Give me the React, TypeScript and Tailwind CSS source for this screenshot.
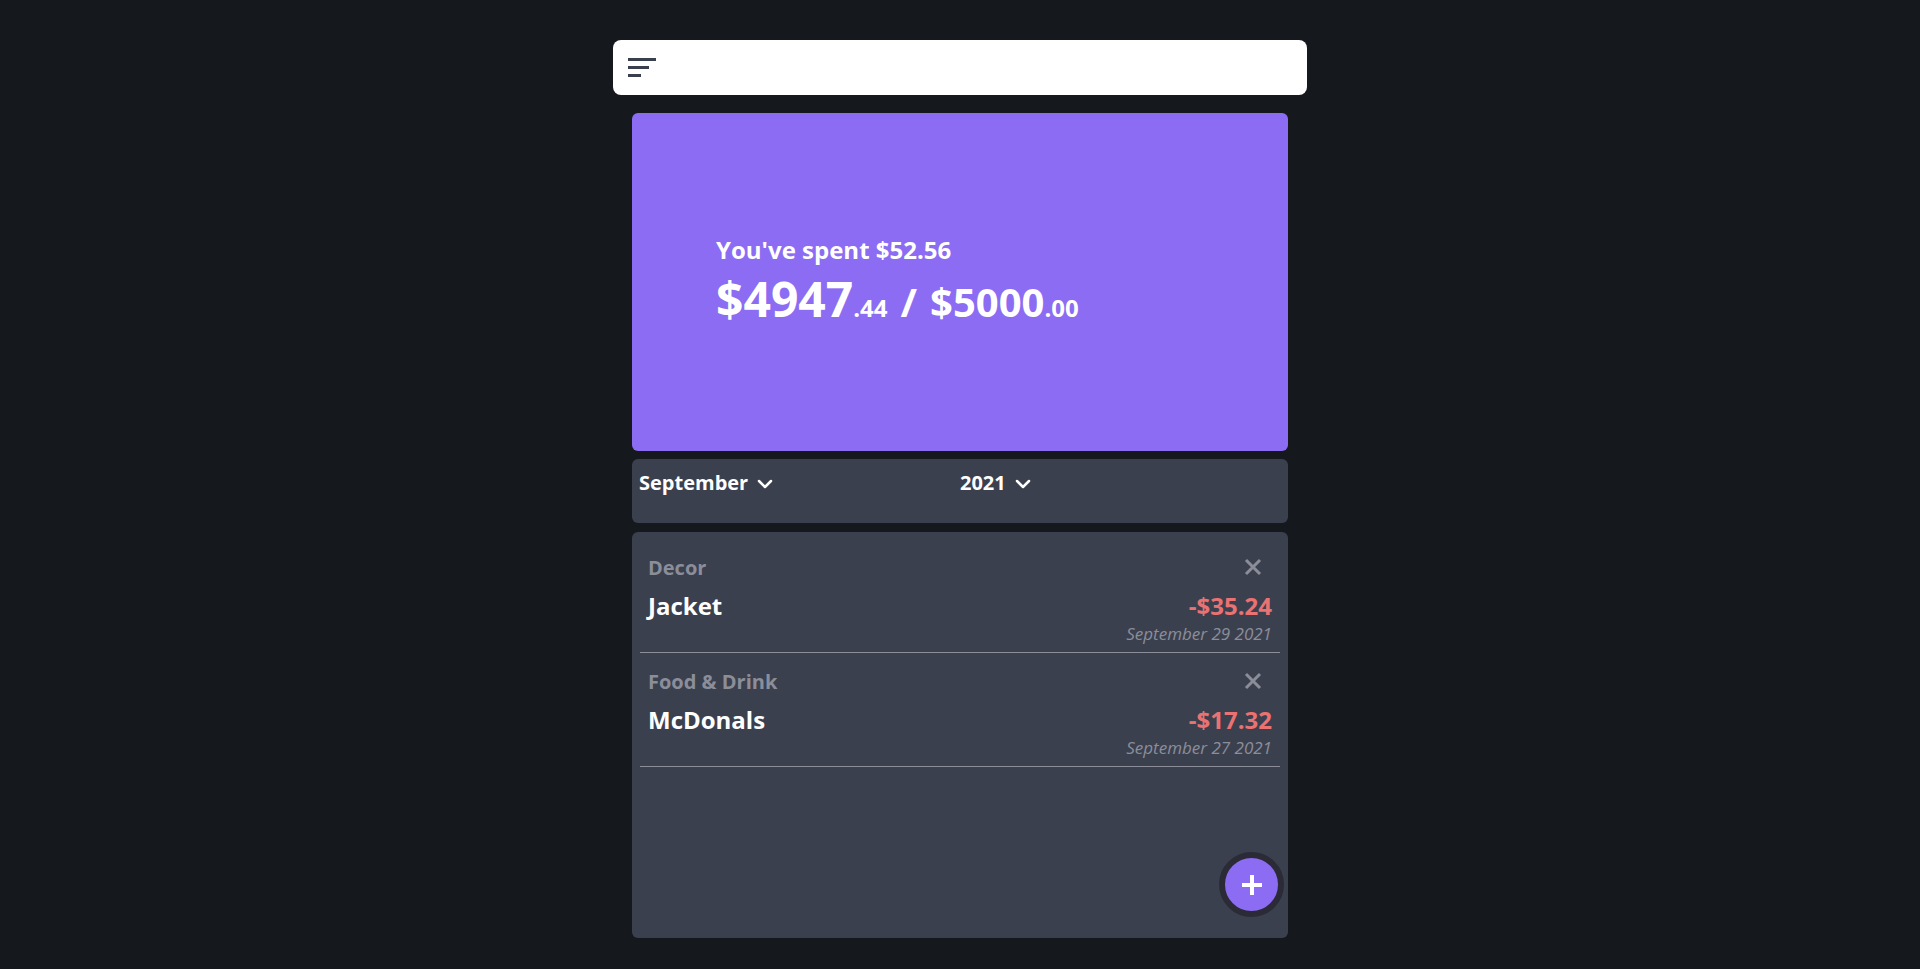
import { useState } from 'react';

type Expense = {
  id: number;
  category: string;
  name: string;
  amount: string;
  date: string;
};

const expenses: Expense[] = [
  { id: 1, category: 'Decor', name: 'Jacket', amount: '-$35.24', date: 'September 29 2021' },
  { id: 2, category: 'Food & Drink', name: 'McDonals', amount: '-$17.32', date: 'September 27 2021' },
];

function MenuIcon() {
  return (
    <div className="flex flex-col gap-[5px]">
      <span className="block h-[3px] w-[28px] bg-[#3a3f4e]" />
      <span className="block h-[3px] w-[21px] bg-[#3a3f4e]" />
      <span className="block h-[3px] w-[13px] bg-[#3a3f4e]" />
    </div>
  );
}

function Chevron() {
  return (
    <svg width="16" height="10" viewBox="0 0 16 10" className="ml-[9px] mt-[2px]">
      <polyline
        points="2,2 8,8 14,2"
        fill="none"
        stroke="white"
        strokeWidth="2.5"
        strokeLinecap="round"
        strokeLinejoin="round"
      />
    </svg>
  );
}

function CloseIcon() {
  return (
    <svg width="18" height="18" viewBox="0 0 18 18">
      <path d="M2 2 L16 16 M16 2 L2 16" stroke="#8b8e99" strokeWidth="3" />
    </svg>
  );
}

function ExpenseRow({ data, onRemove }: { data: Expense; onRemove: (id: number) => void }) {
  return (
    <li className="mx-2 border-b border-[#8b8e99] px-2 pt-[15px] pb-[6px]">
      <div className="flex h-7 items-center justify-between">
        <span className="text-[20px] font-bold leading-7 text-[#8b8e99]">{data.category}</span>
        <button onClick={() => onRemove(data.id)} className="mb-[3px] mr-[10px]">
          <CloseIcon />
        </button>
      </div>
      <div className="mt-2 flex items-center justify-between text-[24px] font-bold leading-8">
        <span className="text-white">{data.name}</span>
        <span className="text-[#ea7272]">{data.amount}</span>
      </div>
      <div className="text-right text-[17px] italic leading-6 text-[#8b8e99]">{data.date}</div>
    </li>
  );
}

export default function App() {
  const [items, setItems] = useState(expenses);

  return (
    <div
      className="h-screen overflow-hidden bg-[#15181d] pt-10"
      style={{ fontFamily: '"Open Sans", "Noto Sans", sans-serif' }}>
      <div className="mx-auto flex w-[694px] flex-col items-center">
        <header className="flex h-[55px] w-full items-center rounded-lg bg-white px-[15px]">
          <button>
            <MenuIcon />
          </button>
        </header>

        <section className="mt-[18px] flex h-[338px] w-[656px] flex-col justify-center rounded-md bg-[#8b6cf2] pb-[8px] pl-[84px] text-white">
          <p className="text-[24px] font-bold leading-8">You've spent $52.56</p>
          <div className="mt-[9px] flex items-baseline font-bold leading-none">
            <span className="text-[48px]">$4947</span>
            <span className="text-[24px]">.44</span>
            <span className="mx-[13px] text-[40px]">/</span>
            <span className="text-[40px]">$5000</span>
            <span className="text-[24px]">.00</span>
          </div>
        </section>

        <section className="mt-2 flex h-16 w-[656px] rounded-md bg-[#3b404f] pt-[10px] text-white">
          <div className="flex h-7 w-[328px] items-center pl-[7px]">
            <span className="text-[20px] font-bold leading-7">September</span>
            <Chevron />
          </div>
          <div className="flex h-7 items-center">
            <span className="text-[20px] font-bold leading-7">2021</span>
            <Chevron />
          </div>
        </section>

        <section className="relative mt-[9px] h-[406px] w-[656px] rounded-md bg-[#3b404f] pt-[7px]">
          <ul>
            {items.map((e) => (
              <ExpenseRow key={e.id} data={e} onRemove={(id) => setItems(items.filter((i) => i.id !== id))} />
            ))}
          </ul>
          <button className="absolute bottom-[21px] right-[4px] flex h-[65px] w-[65px] items-center justify-center rounded-full border-[6px] border-[#2a2b36] bg-[#8b6cf2]">
            <svg width="22" height="22" viewBox="0 0 22 22">
              <path d="M11 1 V21 M1 11 H21" stroke="white" strokeWidth="4" />
            </svg>
          </button>
        </section>
      </div>
    </div>
  );
}
